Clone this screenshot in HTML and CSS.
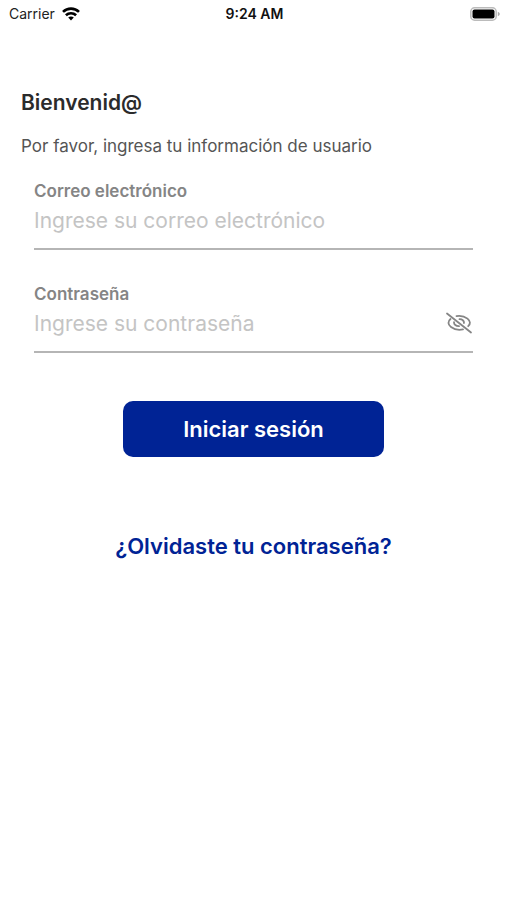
FILE: index.html
```html
<!DOCTYPE html>
<html lang="es">
<head>
    <meta charset="UTF-8">
    <meta name="viewport" content="width=device-width, initial-scale=1.0">
    <title>Iniciar sesión</title>
    <link rel="stylesheet" href="styles.css">
</head>
<body>
    <header class="status-bar">
        <div class="carrier">
            <span>Carrier</span>
            <svg width="18" height="14" viewBox="0 0 18 14" fill="none" stroke="#000" stroke-width="2.6" aria-hidden="true">
                <path d="M1 4.9C5.5 0.5 12.5 0.5 17 4.9"/>
                <path d="M3.9 8.3C6.8 5.5 11.2 5.5 14.1 8.3"/>
                <path d="M9 13.6L6.2 10.6C7.8 9.2 10.2 9.2 11.8 10.6Z" fill="#000" stroke="none"/>
            </svg>
        </div>
        <span class="time">9:24 AM</span>
        <div class="battery">
            <svg width="30" height="14" viewBox="0 0 30 14" aria-hidden="true">
                <rect x="0.8" y="0.8" width="25.4" height="12.4" rx="3.8" fill="#fff" stroke="#bbb" stroke-width="1.5"/>
                <rect x="2.5" y="2.5" width="22" height="9" rx="2" fill="#000"/>
                <path d="M27.8 4.8C30.4 5.6 30.4 8.4 27.8 9.2Z" fill="#aaa"/>
            </svg>
        </div>
    </header>

    <main class="login">
        <h1>Bienvenid@</h1>
        <p class="intro">Por favor, ingresa tu información de usuario</p>

        <form class="login-form">
            <div class="field">
                <label for="email">Correo electrónico</label>
                <div class="input-row">
                    <input type="email" id="email" placeholder="Ingrese su correo electrónico">
                </div>
            </div>

            <div class="field">
                <label for="password">Contraseña</label>
                <div class="input-row">
                    <input type="password" id="password" placeholder="Ingrese su contraseña">
                    <button type="button" class="toggle" id="togglePassword" aria-label="Mostrar contraseña">
                        <svg width="28" height="24" viewBox="0 0 28 24" fill="none" stroke="#858585" stroke-width="1.8" stroke-linecap="round" aria-hidden="true">
                            <path d="M2 2.5L26 21.5"/>
                            <path d="M5.5 8C2.6 10.4 2.8 13.6 6 16C9.4 18.6 14 19.2 18 18.4"/>
                            <path d="M11.5 5.1C15.5 4.5 19.5 5.300 22.5 7.6C25.6 10.2 25.6 13 23.2 15.200"/>
                            <path d="M9 11.200C8.900 13.300 10.900 15.300 14 15.200"/>
                            <path d="M14.500 8.200C17.200 8.100 19.200 9.900 19 12"/>
                        </svg>
                    </button>
                </div>
            </div>

            <button type="submit" class="submit-btn">Iniciar sesión</button>
        </form>

        <a class="forgot" href="#">¿Olvidaste tu contraseña?</a>
    </main>

    <script>
        const passwordInput = document.getElementById('password');
        const togglePassword = document.getElementById('togglePassword');

        togglePassword.addEventListener('click', () => {
            passwordInput.type = passwordInput.type === 'password' ? 'text' : 'password';
        });
    </script>
</body>
</html>
```
FILE: styles.css
```css
* {
    box-sizing: border-box;
}
body {
    margin: 0;
    background: #fff;
    font-family: Inter, "Liberation Sans", sans-serif;
}
.status-bar {
    display: grid;
    grid-template-columns: 1fr auto 1fr;
    align-items: center;
    height: 27px;
    padding: 0 7px 0 9px;
    font-size: 14px;
    color: #222;
}
.carrier {
    display: flex;
    align-items: center;
    gap: 7px;
}
.time {
    font-weight: 600;
    color: #111;
}
.battery {
    display: flex;
    justify-content: flex-end;
}
.login {
    display: flex;
    flex-direction: column;
    padding: 61px 21px;
}
h1 {
    margin: 0 0 18px;
    font-size: 21px;
    font-weight: 600;
    line-height: 30px;
    color: #2b2b2b;
}
.intro {
    margin: 0 0 25px;
    font-size: 17px;
    line-height: 20px;
    color: #555;
}
.login-form {
    display: flex;
    flex-direction: column;
    gap: 34px;
    padding: 0 13px;
}
.field label {
    display: block;
    font-size: 17px;
    font-weight: 600;
    line-height: 20px;
    color: #858585;
}
.input-row {
    display: flex;
    align-items: center;
    padding-bottom: 9px;
    border-bottom: 2px solid #b5b5b5;
}
.input-row input {
    flex: 1;
    min-width: 0;
    height: 38px;
    padding: 0;
    border: none;
    outline: none;
    background: none;
    font-family: inherit;
    font-size: 21px;
    color: #2b2b2b;
}
.input-row input::placeholder {
    color: #c4c4c4;
}
.toggle {
    display: flex;
    padding: 0;
    border: none;
    background: none;
    cursor: pointer;
}
.submit-btn {
    align-self: center;
    width: 261px;
    height: 56px;
    margin-top: 14px;
    border: none;
    border-radius: 10px;
    background: #002395;
    color: #fff;
    font-family: inherit;
    font-size: 22px;
    font-weight: 600;
    cursor: pointer;
}
.forgot {
    align-self: center;
    margin-top: 74px;
    font-size: 22px;
    font-weight: 600;
    line-height: 30px;
    color: #002395;
    text-decoration: none;
}
```
